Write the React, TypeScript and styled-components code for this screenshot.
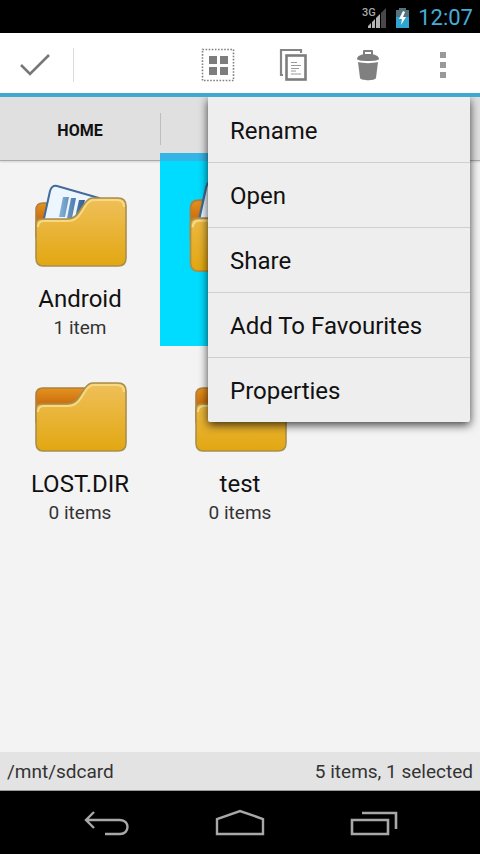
import React from 'react';
import styled, { createGlobalStyle } from 'styled-components';

const GlobalStyle = createGlobalStyle`
  * { box-sizing: border-box; }
  body { margin: 0; background: #f3f3f3; font-family: Roboto, "Liberation Sans", sans-serif; }
  button { font: inherit; color: inherit; border: 0; padding: 0; margin: 0; background: none; cursor: pointer; }
  svg { display: block; }
`;

const Screen = styled.div`
  min-height: 100vh;
  display: flex;
  flex-direction: column;
  background: #f3f3f3;
  color: #111;
`;

const StatusBar = styled.div`
  height: 33px;
  display: flex;
  align-items: center;
  justify-content: flex-end;
  gap: 8px;
  padding: 2px 7px 0;
  background: #000;
`;

const Clock = styled.time`
  color: #45aed6;
  font-size: 22px;
  line-height: 30px;
`;

const ActionBar = styled.header`
  position: relative;
  z-index: 2;
  display: flex;
  align-items: center;
  height: 64px;
  padding-top: 4px;
  background: #fff;
  border-bottom: 4px solid #3daacf;
`;

const DoneButton = styled.button`
  width: 74px;
  height: 34px;
  display: grid;
  place-items: center;
  padding-right: 4px;
  border-right: 1px solid #dcdcdc;
`;

const Actions = styled.div`
  margin-left: auto;
  display: flex;
`;

const ActionButton = styled.button`
  width: 75px;
  height: 56px;
  display: grid;
  place-items: center;
`;

const Menu = styled.div`
  position: absolute;
  top: 100%;
  right: 10px;
  width: 262px;
  display: flex;
  flex-direction: column;
  background: #eee;
  border-radius: 0 0 2px 2px;
  box-shadow: 0 3px 10px rgba(0, 0, 0, 0.75);
  clip-path: inset(0 -20px -20px -20px);
  margin-top: 4px;
`;

const MenuItem = styled.button`
  height: 65px;
  padding: 2px 22px 0;
  text-align: left;
  font-size: 24px;
  line-height: 28px;
  & + & { border-top: 1px solid #cfcfcf; }
`;

const Tabs = styled.nav`
  display: flex;
  height: 64px;
  background: #e0e0e0;
  border-bottom: 1px solid #aaa;
  box-shadow: 0 1px 2px rgba(0, 0, 0, 0.15);
`;

const Tab = styled.button<{ $active?: boolean }>`
  flex: 1;
  display: flex;
  align-items: center;
  justify-content: center;
  height: 64px;
  padding-top: 2px;
  font-size: 16px;
  font-weight: 700;
  border-bottom: ${(p) => (p.$active ? '8px solid #33b5e5' : '0')};
`;

const TabDivider = styled.span`
  align-self: center;
  width: 1px;
  height: 32px;
  margin-right: -1px;
  background: #bdbdbd;
`;

const FileGrid = styled.main`
  flex: 1;
  display: grid;
  grid-template-columns: repeat(3, 1fr);
  grid-auto-rows: 185px;
`;

const FileCell = styled.button<{ $selected?: boolean }>`
  display: flex;
  flex-direction: column;
  align-items: center;
  justify-content: flex-start;
  padding-top: ${(p) => (p.$selected ? '10px' : '16px')};
  background: ${(p) => (p.$selected ? '#00dcff' : 'transparent')};
`;

const FileName = styled.span`
  margin-top: 12px;
  font-size: 24px;
  line-height: 28px;
`;

const FileMeta = styled.span`
  font-size: 19px;
  line-height: 30px;
  color: #333;
`;

const PathBar = styled.footer`
  display: flex;
  align-items: center;
  justify-content: space-between;
  height: 39px;
  padding: 0 7px;
  font-size: 19px;
  color: #333;
  background: #e3e3e3;
  border-bottom: 1px solid #999;
`;

const NavBar = styled.div`
  display: flex;
  justify-content: center;
  height: 63px;
  background: #000;
`;

const NavButton = styled.button`
  width: 134px;
  display: grid;
  place-items: center;
  padding-top: 3px;
`;

const SignalIcon = () => (
  <svg width="26" height="24" viewBox="0 0 26 24" role="img" aria-label="3G signal">
    <text x="1" y="10" fontSize="11" fontWeight="500" fontFamily="Roboto, sans-serif" fill="#a8a8a8">3G</text>
    <path d="M7 22v-2l3-3v5zM11 22v-6l3-3v9zM15 22v-10l4-4v14z" fill="#b4b4b4" />
    <path d="M20 22V7l5-5v20z" fill="#484848" />
  </svg>
);

const BatteryIcon = () => (
  <svg width="15" height="22" viewBox="0 0 15 22" role="img" aria-label="Battery charging">
    <path d="M4 1h7v2h3v7H1V3h3z" fill="#56727c" />
    <path d="M1 10h13v11H1z" fill="#2fa4d0" />
    <path d="M8 4L4 12h3l-1 6 5-8H8l2-5z" fill="#fff" />
  </svg>
);

const CheckIcon = () => (
  <svg width="32" height="26" viewBox="0 0 32 26" aria-hidden="true">
    <path d="M2 13l9 9L30 3" fill="none" stroke="#777" strokeWidth="2.6" />
  </svg>
);

const SelectAllIcon = () => (
  <svg width="34" height="34" viewBox="0 0 34 34" aria-hidden="true">
    <rect x="1.5" y="1.5" width="31" height="31" fill="none" stroke="#808080" strokeWidth="1.6" strokeDasharray="1.6 1.5" />
    <path d="M8 8h8v8H8zM19 8h8v8h-8zM8 19h8v8H8zM19 19h8v8h-8z" fill="#7d7d7d" />
  </svg>
);

const CopyIcon = () => (
  <svg width="30" height="34" viewBox="0 0 30 34" aria-hidden="true">
    <path d="M5 27H3V2h20v3" fill="none" stroke="#858585" strokeWidth="2.2" />
    <rect x="8.5" y="7.5" width="19" height="24" fill="#fff" stroke="#7d7d7d" strokeWidth="2.6" />
    <path d="M13 14.5h6M13 17.5h10M13 20.5h8M13 23h5M13 26h10" stroke="#999" strokeWidth="1.2" />
  </svg>
);

const TrashIcon = () => (
  <svg width="24" height="34" viewBox="0 0 24 34" aria-hidden="true">
    <path d="M8 7V3h8v4" fill="none" stroke="#808080" strokeWidth="2" strokeLinejoin="round" />
    <path d="M1 11c0-3 4-5 11-5s11 2 11 5c0 1-4 2-11 2S1 12 1 11z" fill="#7d7d7d" />
    <path d="M2 14c6 1.5 14 1.5 20 0l-2 16c-1 3-15 3-16 0z" fill="#808080" />
  </svg>
);

const MoreIcon = () => (
  <svg width="8" height="28" viewBox="0 0 8 28" aria-hidden="true">
    <path d="M1 1h6v6H1zM1 11h6v6H1zM1 21h6v6H1z" fill="#999" />
  </svg>
);

const FolderIcon = ({ filled, size = 96 }: { filled?: boolean; size?: number }) => (
  <svg width={size} height={size} viewBox="0 0 96 96" aria-hidden="true">
    <defs>
      <linearGradient id="folderFront" x1="0" y1="0" x2="0" y2="1">
        <stop offset="0" stopColor="#efc05a" />
        <stop offset="1" stopColor="#e2a711" />
      </linearGradient>
      <linearGradient id="folderBack" x1="0" y1="0" x2="0" y2="1">
        <stop offset="0" stopColor="#e4931f" />
        <stop offset="0.4" stopColor="#cf7310" />
      </linearGradient>
      <linearGradient id="paperLines" x1="0" y1="0" x2="1" y2="0">
        <stop offset="0" stopColor="#86b4d8" />
        <stop offset="1" stopColor="#2f5c94" />
      </linearGradient>
    </defs>
    <path d="M4 33q0-7 7-7h44v34H4z" fill="url(#folderBack)" stroke="#ab8140" strokeWidth="1.6" />
    {filled && (
      <>
        <path d="M11 46L18 14q2-6 7-5L67 21v27H11z" fill="#edf6ff" stroke="#416b98" strokeWidth="2" />
        <path d="M31 20h6l-4 20h-6zM39 21h5l-4 20h-5zM47 23h6l-5 18h-5z" fill="url(#paperLines)" />
      </>
    )}
    <path
      d="M4 47q0-5 6-5h25c6 0 9-2 12-7l6-9c3-4 5-5 8-5h25q8 0 8 8v52q0 8-8 8H11q-7 0-7-8z"
      fill="url(#folderFront)"
      stroke="#a98f4c"
      strokeWidth="1.6"
    />
    <path
      d="M6 50q0-6 6-6h24c6 0 10-3 13-8l5-8c3-4 5-5 8-5h23q7 0 7 7"
      fill="none"
      stroke="#f8d983"
      strokeWidth="2"
    />
  </svg>
);

const BackIcon = () => (
  <svg width="48" height="32" viewBox="0 0 48 32" aria-hidden="true">
    <path d="M12 4L4 12l8 8M4 12h34c10 0 10 14 0 14H23" fill="none" stroke="#a8a8a8" strokeWidth="2.4" />
  </svg>
);

const HomeIcon = () => (
  <svg width="50" height="32" viewBox="0 0 50 32" aria-hidden="true">
    <path d="M2 26V11L25 3l23 8v15z" fill="none" stroke="#a8a8a8" strokeWidth="2.4" />
  </svg>
);

const RecentIcon = () => (
  <svg width="48" height="32" viewBox="0 0 48 32" aria-hidden="true">
    <path d="M2 12h36v14H2zM12 5h34v16" fill="none" stroke="#a8a8a8" strokeWidth="2.6" />
  </svg>
);

const menuItems = ['Rename', 'Open', 'Share', 'Add To Favourites', 'Properties'];

type FileEntry = { id: number; name?: string; meta?: string; filled?: boolean; selected?: boolean };

const files: FileEntry[] = [
  { id: 1, name: 'Android', meta: '1 item', filled: true },
  { id: 2, filled: true, selected: true },
  { id: 3 },
  { id: 4, name: 'LOST.DIR', meta: '0 items' },
  { id: 5, name: 'test', meta: '0 items' },
];

export default function App() {
  return (
    <Screen>
      <GlobalStyle />
      <StatusBar>
        <SignalIcon />
        <BatteryIcon />
        <Clock>12:07</Clock>
      </StatusBar>
      <ActionBar>
        <DoneButton aria-label="Done"><CheckIcon /></DoneButton>
        <Actions>
          <ActionButton aria-label="Select all"><SelectAllIcon /></ActionButton>
          <ActionButton aria-label="Copy"><CopyIcon /></ActionButton>
          <ActionButton aria-label="Delete"><TrashIcon /></ActionButton>
          <ActionButton aria-label="More options" aria-expanded="true"><MoreIcon /></ActionButton>
        </Actions>
        <Menu role="menu">
          {menuItems.map((label) => (
            <MenuItem key={label} role="menuitem">{label}</MenuItem>
          ))}
        </Menu>
      </ActionBar>
      <Tabs>
        <Tab>HOME</Tab>
        <TabDivider />
        <Tab $active aria-label="Current folder" />
        <Tab aria-label="Next tab" />
      </Tabs>
      <FileGrid>
        {files.map((file) => (
          <FileCell key={file.id} $selected={file.selected} aria-label={file.name ?? 'Folder'}>
            <FolderIcon filled={file.filled} size={file.selected ? 108 : 96} />
            {file.name && <FileName>{file.name}</FileName>}
            {file.meta && <FileMeta>{file.meta}</FileMeta>}
          </FileCell>
        ))}
      </FileGrid>
      <PathBar>
        <span>/mnt/sdcard</span>
        <span>5 items, 1 selected</span>
      </PathBar>
      <NavBar>
        <NavButton aria-label="Back"><BackIcon /></NavButton>
        <NavButton aria-label="Home"><HomeIcon /></NavButton>
        <NavButton aria-label="Recent apps"><RecentIcon /></NavButton>
      </NavBar>
    </Screen>
  );
}
